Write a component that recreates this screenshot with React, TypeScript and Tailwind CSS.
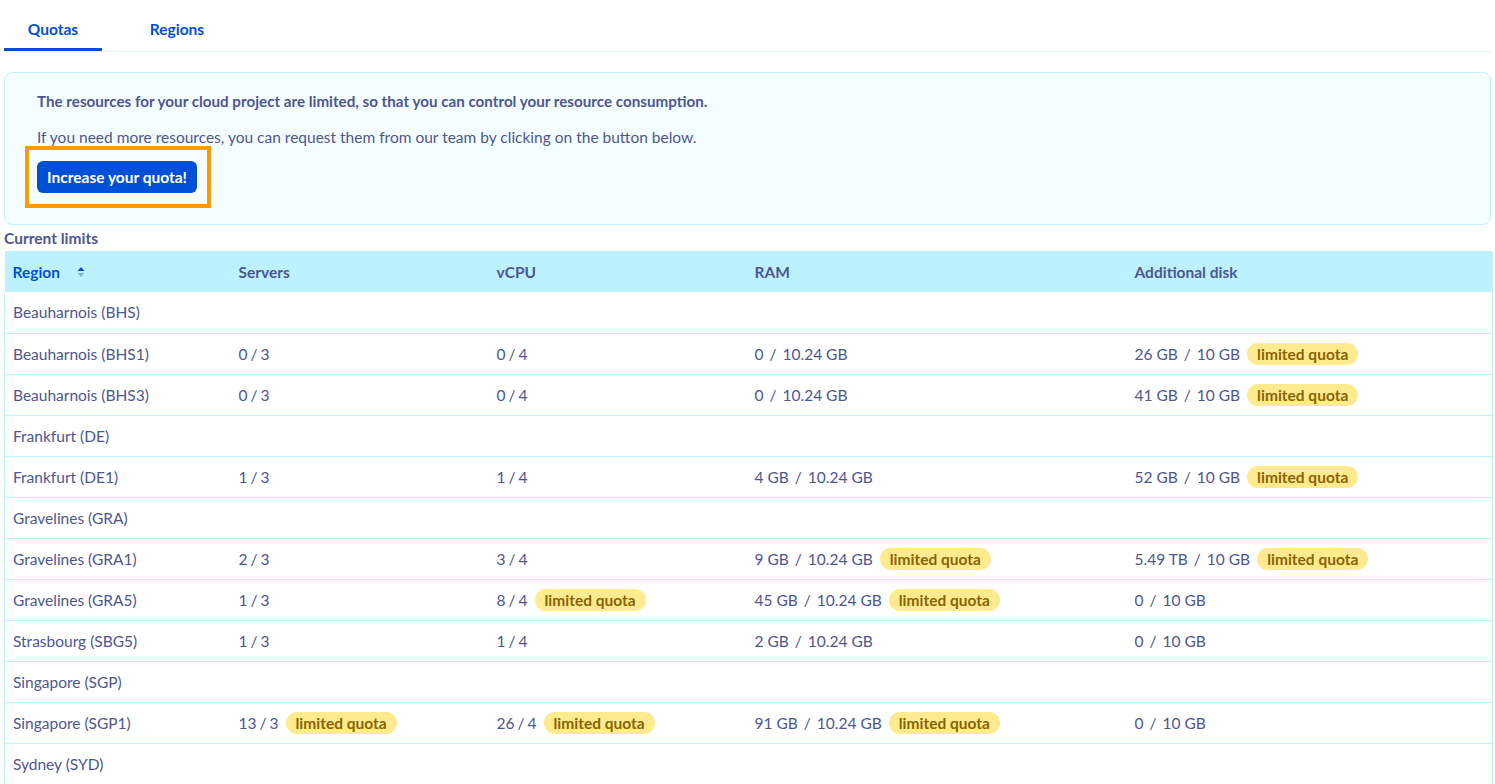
import React from "react";

type Cell = { a: string; b: string; wide?: boolean; limited?: boolean } | null;
type Row = { region: string; cells: [Cell, Cell, Cell, Cell] };

const rows: Row[] = [
  { region: "Beauharnois (BHS)", cells: [null, null, null, null] },
  { region: "Beauharnois (BHS1)", cells: [{ a: "0", b: "3" }, { a: "0", b: "4" }, { a: "0", b: "10.24 GB", wide: true }, { a: "26 GB", b: "10 GB", wide: true, limited: true }] },
  { region: "Beauharnois (BHS3)", cells: [{ a: "0", b: "3" }, { a: "0", b: "4" }, { a: "0", b: "10.24 GB", wide: true }, { a: "41 GB", b: "10 GB", wide: true, limited: true }] },
  { region: "Frankfurt (DE)", cells: [null, null, null, null] },
  { region: "Frankfurt (DE1)", cells: [{ a: "1", b: "3" }, { a: "1", b: "4" }, { a: "4 GB", b: "10.24 GB", wide: true }, { a: "52 GB", b: "10 GB", wide: true, limited: true }] },
  { region: "Gravelines (GRA)", cells: [null, null, null, null] },
  { region: "Gravelines (GRA1)", cells: [{ a: "2", b: "3" }, { a: "3", b: "4" }, { a: "9 GB", b: "10.24 GB", wide: true, limited: true }, { a: "5.49 TB", b: "10 GB", wide: true, limited: true }] },
  { region: "Gravelines (GRA5)", cells: [{ a: "1", b: "3" }, { a: "8", b: "4", limited: true }, { a: "45 GB", b: "10.24 GB", wide: true, limited: true }, { a: "0", b: "10 GB", wide: true }] },
  { region: "Strasbourg (SBG5)", cells: [{ a: "1", b: "3" }, { a: "1", b: "4" }, { a: "2 GB", b: "10.24 GB", wide: true }, { a: "0", b: "10 GB", wide: true }] },
  { region: "Singapore (SGP)", cells: [null, null, null, null] },
  { region: "Singapore (SGP1)", cells: [{ a: "13", b: "3", limited: true }, { a: "26", b: "4", limited: true }, { a: "91 GB", b: "10.24 GB", wide: true, limited: true }, { a: "0", b: "10 GB", wide: true }] },
  { region: "Sydney (SYD)", cells: [null, null, null, null] },
];

function Badge() {
  return (
    <span className="ml-[7px] inline-flex h-[22px] items-center rounded-full bg-[#ffeb8f] px-[10px] font-bold text-[#8a6300]">
      limited quota
    </span>
  );
}

export default function App() {
  return (
    <div
      className="min-h-screen bg-white text-[15.5px] leading-[20px] text-[#4d5693]"
      style={{ fontFamily: "Lato, 'Noto Sans', sans-serif" }}
    >
      <div className="px-[4px]">
        <div className="flex border-b border-[#e6f4fb] pt-[19px]">
          <div className="w-[98px] border-b-[3px] border-[#0050d7] pb-[9px] text-center font-bold text-[#0050d7]">
            Quotas
          </div>
          <div className="w-[150px] pb-[12px] text-center font-bold text-[#0050d7]">Regions</div>
        </div>

        <div className="mt-[20px] rounded-[8px] border border-[#bef1ff] bg-[#f5feff] pb-[16px] pl-[32px] pt-[18px]">
          <p className="text-[15.2px] font-bold">
            The resources for your cloud project are limited, so that you can control your resource consumption.
          </p>
          <p className="mt-[16px]">
            If you need more resources, you can request them from our team by clicking on the button below.
          </p>
          <div className="ml-[-12px] mt-[-1px] inline-block border-[4px] border-[#ff9900] bg-[#f5feff] py-[11px] pl-[8px] pr-[10px]">
            <button className="h-[32px] w-[160px] rounded-[6px] bg-[#0050d7] font-bold text-white">
              Increase your quota!
            </button>
          </div>
        </div>

        <div className="mt-[3px] font-bold">Current limits</div>

        <table className="mt-[3px] w-[1489px] table-fixed border-collapse">
          <colgroup>
            <col className="w-[225px]" />
            <col className="w-[258px]" />
            <col className="w-[258px]" />
            <col className="w-[380px]" />
            <col />
          </colgroup>
          <thead>
            <tr className="h-[41px] bg-[#bef1ff]">
              <th className="px-[8px] text-left font-bold text-[#0050d7]">
                <span className="inline-flex items-center gap-[16px]">
                  Region
                  <svg width="10" height="12" viewBox="0 0 10 12">
                    <path d="M5 1 L8.5 5 H1.5 Z" fill="#0050d7" />
                    <path d="M5 11 L8.5 7 H1.5 Z" fill="#7fb0f0" />
                  </svg>
                </span>
              </th>
              <th className="px-[9px] text-left font-bold">Servers</th>
              <th className="px-[9px] text-left font-bold">vCPU</th>
              <th className="px-[9px] text-left font-bold">RAM</th>
              <th className="px-[9px] text-left font-bold">Additional disk</th>
            </tr>
          </thead>
          <tbody>
            {rows.map((r) => (
              <tr key={r.region} className="h-[41px] border-x border-b border-[#bef1ff]">
                <td className="whitespace-nowrap px-[8px]">{r.region}</td>
                {r.cells.map((c, i) => (
                  <td key={i} className="whitespace-nowrap px-[9px]">
                    {c && (
                      <span className="inline-flex items-center">
                        <span>{c.a}</span>
                        <span className={c.wide ? "mx-[6px]" : "mx-[3px]"}>/</span>
                        <span>{c.b}</span>
                        {c.limited && <Badge />}
                      </span>
                    )}
                  </td>
                ))}
              </tr>
            ))}
          </tbody>
        </table>
      </div>
    </div>
  );
}
